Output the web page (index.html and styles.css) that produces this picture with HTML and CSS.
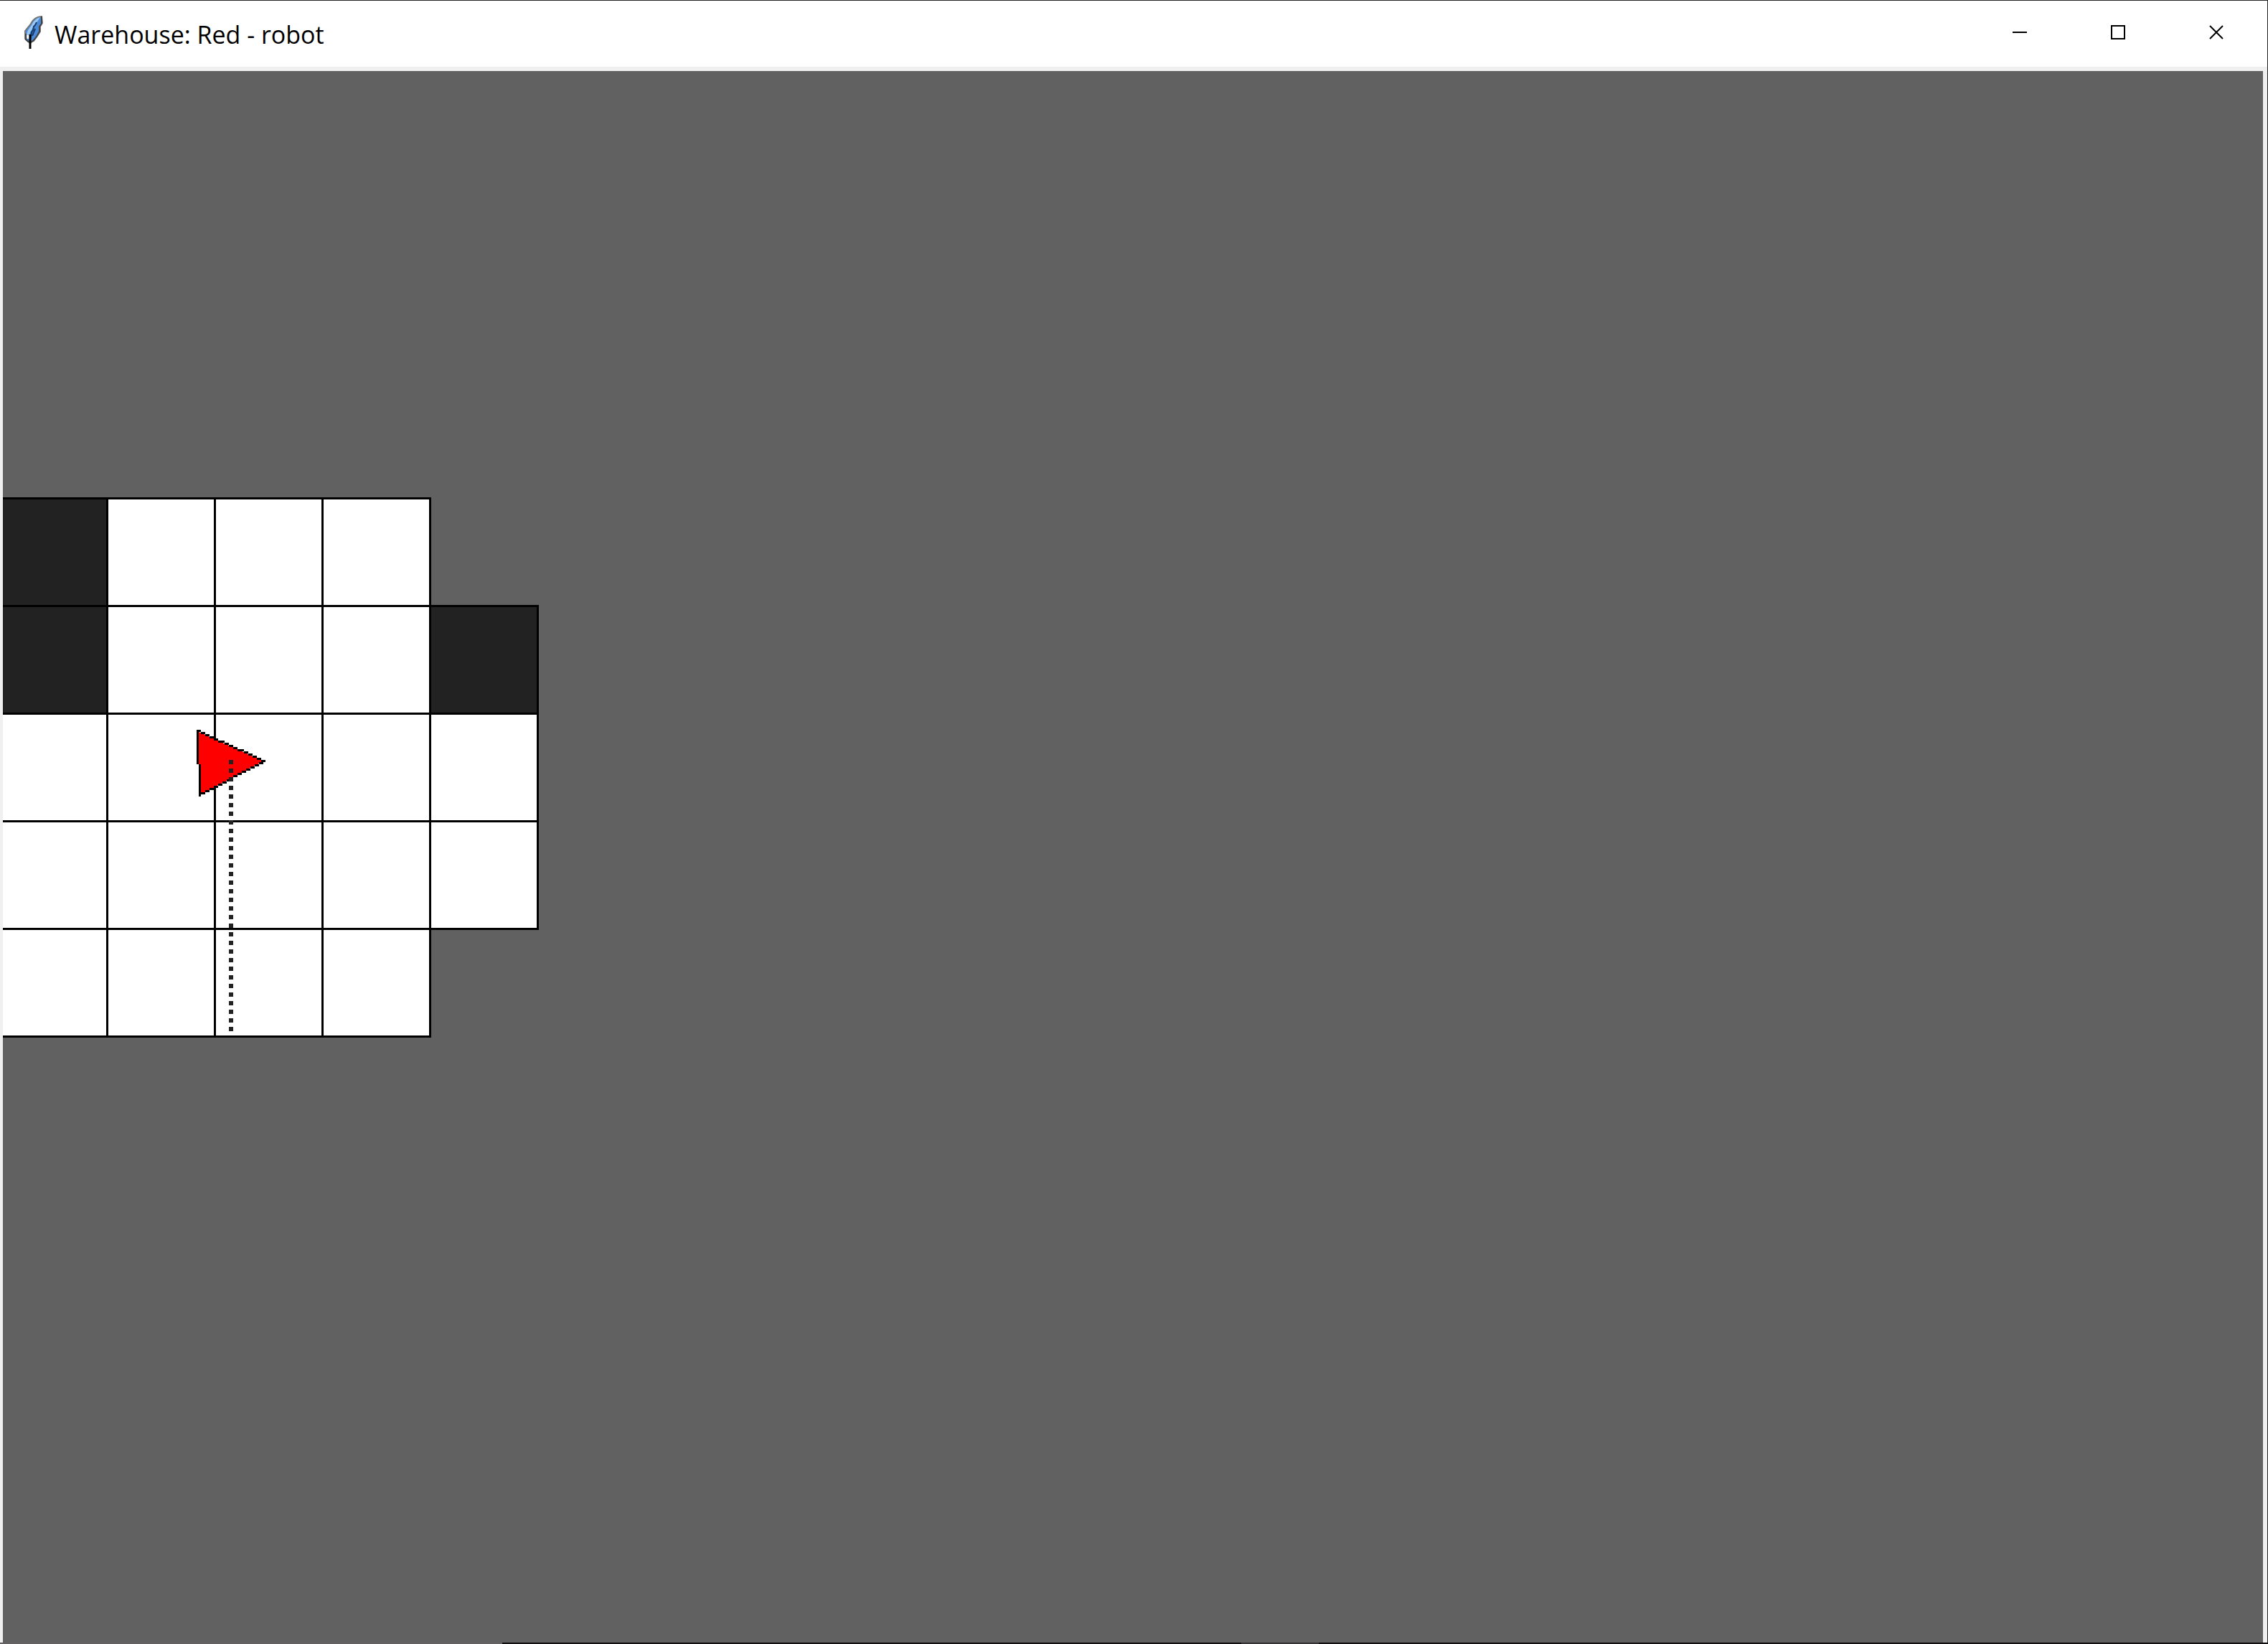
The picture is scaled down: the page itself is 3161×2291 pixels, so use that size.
FILE: index.html
```html
<!DOCTYPE html>
<html lang="en">
<head>
<meta charset="utf-8">
<title>Warehouse: Red - robot</title>
<link rel="stylesheet" href="styles.css">
</head>
<body>
<div class="window">
  <header class="titlebar">
    <svg class="feather" viewBox="0 0 26 48" aria-hidden="true">
      <path d="M24 1C17 1 12 5 9 11L6 15L1 21V32L5 36L8 37L13 35L18 28L22 22L22 15L25 10Z" fill="#4a8ad6" stroke="#777" stroke-width="2"/>
      <path d="M22 2C16 4 12 8 10 13L5 20L3 26V31L6 28L8 23L11 18L15 13L18 8Z" fill="#9cc8f4"/>
      <path d="M17 9L15 13L13 15L12 20L10 23L9 29L8 33" fill="none" stroke="#173a6b" stroke-width="2"/>
      <path d="M15 18L13 23L11 28" fill="none" stroke="#173a6b" stroke-width="2"/>
      <path d="M24 1V11L21 15V22L17 29L13 34L8 38L2 33V25" fill="none" stroke="#444" stroke-width="2"/>
      <path d="M5 27V32" stroke="#fff" stroke-width="3"/>
      <path d="M8 26V46" stroke="#000" stroke-width="3"/>
    </svg>
    <h1 class="title">Warehouse: Red - robot</h1>
    <div class="controls">
      <button class="control" type="button" aria-label="Minimize"><svg class="glyph" viewBox="0 0 20 20"><path d="M0 10h20"/></svg></button>
      <button class="control" type="button" aria-label="Maximize"><svg class="glyph" viewBox="0 0 20 20"><path d="M1 1h18v18h-18z"/></svg></button>
      <button class="control" type="button" aria-label="Close"><svg class="glyph" viewBox="0 0 20 20"><path d="M1 1l18 18M19 1l-18 18"/></svg></button>
    </div>
  </header>
  <main class="canvas">
    <div class="floor">
      <div class="cell wall"></div><div class="cell"></div><div class="cell"></div><div class="cell"></div><div class="unknown"></div>
      <div class="cell wall"></div><div class="cell"></div><div class="cell"></div><div class="cell"></div><div class="cell wall"></div>
      <div class="cell"></div><div class="cell"></div><div class="cell"></div><div class="cell"></div><div class="cell"></div>
      <div class="cell"></div><div class="cell"></div><div class="cell"></div><div class="cell"></div><div class="cell"></div>
      <div class="cell"></div><div class="cell"></div><div class="cell"></div><div class="cell"></div><div class="unknown"></div>
      <svg class="robot" viewBox="0 0 32 31" role="img" aria-label="Red robot">
        <path class="robot-body" d="M1 1L31 14.5L2 30V16H1Z"/>
        <path class="robot-edge" d="M0 0h2v1h-2zM2 1h2v1h-2zM4 2h2v1h-2zM6 3h2v1h-2zM8 4h2v1h-2zM10 5h3v1h-3zM13 6h2v1h-2zM15 7h2v1h-2zM17 8h2v1h-2zM19 9h3v1h-3zM22 10h2v1h-2zM24 11h2v1h-2zM26 12h2v1h-2zM28 13h2v1h-2zM30 14h2v1h-2zM29 15h2v1h-2zM27 16h2v1h-2zM25 17h2v1h-2zM23 18h2v1h-2zM21 19h2v1h-2zM19 20h2v1h-2zM17 21h2v1h-2zM15 22h2v1h-2zM14 23h2v1h-2zM12 24h2v1h-2zM10 25h2v1h-2zM8 26h2v1h-2zM6 27h2v1h-2zM4 28h2v1h-2zM2 29h2v1h-2zM0 1h1v15h-1zM1 16h1v15h-1z"/>
      </svg>
      <svg class="beam" viewBox="0 0 6 378" role="img" aria-label="Sensor beam">
        <path d="M3 0v378"/>
      </svg>
    </div>
  </main>
  <footer class="edge"><span class="edge-left"></span><span class="edge-mid"></span><span class="edge-tab"></span><span class="edge-right"></span></footer>
</div>
</body>
</html>
```

FILE: styles.css
```css
* { box-sizing: border-box; }

body { margin: 0; background: #f0f0f0; }

.window {
  display: flex;
  flex-direction: column;
  min-height: 100vh;
  border-top: 1px solid #222;
  border-right: 1px solid #222;
}

.titlebar {
  display: flex;
  align-items: flex-start;
  height: 92px;
  padding: 0 3px 0 34px;
  background: #fff;
}

.feather { width: 26px; height: 48px; margin-top: 21px; }

.title {
  flex: 1;
  margin: 0 0 0 16px;
  font: 400 34px/94px "Open Sans", "Noto Sans", sans-serif;
  color: #000;
}

.controls { display: flex; gap: 1px; }

.control {
  display: grid;
  place-items: center;
  width: 136px;
  height: 88px;
  padding: 0;
  border: 0;
  background: transparent;
}

.glyph {
  width: 20px;
  height: 20px;
  fill: none;
  stroke: #000;
  stroke-width: 2;
}

.canvas {
  flex: 1;
  margin: 6px 6px 0 4px;
  padding-top: 594px;
  overflow: hidden;
  background: #616161;
}

/* The first column runs under the left edge of the canvas. */
.floor {
  position: relative;
  display: grid;
  grid-template-columns: repeat(5, 150px);
  grid-auto-rows: 150px;
  margin-left: -6px;
}

.cell {
  margin: 0 -3px -3px 0;
  border: 3px solid #000;
  background: #fff;
}

.wall { background: #222; }

.robot {
  position: absolute;
  left: 276px;
  top: 324px;
  width: 96px;
  height: 93px;
  shape-rendering: crispEdges;
}

.robot-body { fill: #f00; }
.robot-edge { fill: #000; }

.beam {
  position: absolute;
  left: 321px;
  top: 366px;
  width: 6px;
  height: 378px;
  stroke: #222;
  stroke-width: 6;
  stroke-dasharray: 6 6;
}

.edge {
  display: grid;
  grid-template-columns: 700fr 1030fr 108fr 1323fr;
  height: 2px;
  margin-right: -1px;
}

.edge-left { background: #656163; }
.edge-mid, .edge-right { background: #131012; }
.edge-tab { background: #353334; }
```
